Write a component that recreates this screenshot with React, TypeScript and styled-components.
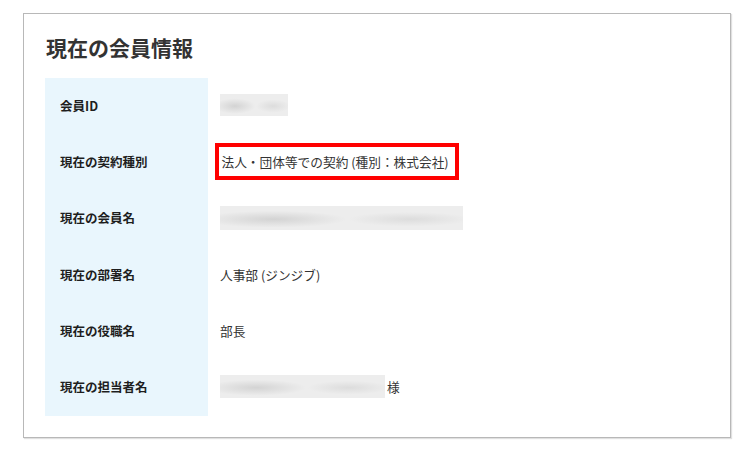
import React from "react";
import styled, { createGlobalStyle } from "styled-components";

const Global = createGlobalStyle`
  html, body { margin: 0; padding: 0; background: #ffffff; }
  body {
    font-family: "Noto Sans CJK JP", "Noto Sans", "Liberation Sans", sans-serif;
    color: #333333;
  }
`;

const Page = styled.div`
  padding: 13px 19px 12px 23px;
  width: 750px;
  box-sizing: border-box;
`;

const Card = styled.section`
  box-sizing: border-box;
  width: 708px;
  height: 425px;
  border: 1px solid #b8b8b8;
  box-shadow: 1px 1px 1px rgba(0, 0, 0, 0.12);
  padding: 20px 21px 21px 21px;
  display: flex;
  flex-direction: column;
`;

const Title = styled.h2`
  margin: 0 0 18px 1px;
  font-size: 21px;
  line-height: 26px;
  font-weight: 700;
  color: #333333;
  letter-spacing: 0;
`;

const Table = styled.div`
  display: grid;
  grid-template-columns: 163px 1fr;
  grid-template-rows: repeat(6, 1fr);
  height: 338px;
`;

const Label = styled.div`
  background: #e9f6fd;
  display: flex;
  align-items: center;
  padding-left: 15px;
  padding-bottom: 2px;
  font-size: 12.5px;
  font-weight: 700;
  color: #1e1e1e;
`;

const Value = styled.div`
  display: flex;
  align-items: center;
  padding-left: 12px;
  padding-bottom: 2px;
  font-size: 12.7px;
  color: #333333;
`;

const Highlight = styled.div`
  border: 4.5px solid #ff0000;
  padding: 5px 6px 5px 2.5px;
  margin-left: -5px;
  line-height: 19px;
`;

const Blur = styled.div<{ $w: number; $h: number }>`
  width: ${(p) => p.$w}px;
  height: ${(p) => p.$h}px;
  background:
    radial-gradient(ellipse 30% 35% at 22% 55%, rgba(190, 190, 190, 0.55), rgba(190, 190, 190, 0) 100%),
    radial-gradient(ellipse 25% 30% at 78% 55%, rgba(200, 200, 200, 0.45), rgba(200, 200, 200, 0) 100%),
    #ededed;
`;

const Suffix = styled.span`
  margin-left: 2px;
`;

export default function App() {
  return (
    <>
      <Global />
      <Page>
        <Card>
          <Title>現在の会員情報</Title>
          <Table>
            <Label>会員ID</Label>
            <Value>
              <Blur $w={68} $h={22} />
            </Value>
            <Label>現在の契約種別</Label>
            <Value>
              <Highlight>法人・団体等での契約 (種別：株式会社)</Highlight>
            </Value>
            <Label>現在の会員名</Label>
            <Value>
              <Blur $w={243} $h={24} />
            </Value>
            <Label>現在の部署名</Label>
            <Value>人事部 (ジンジブ)</Value>
            <Label>現在の役職名</Label>
            <Value>部長</Value>
            <Label>現在の担当者名</Label>
            <Value>
              <Blur $w={165} $h={23} />
              <Suffix>様</Suffix>
            </Value>
          </Table>
        </Card>
      </Page>
    </>
  );
}
